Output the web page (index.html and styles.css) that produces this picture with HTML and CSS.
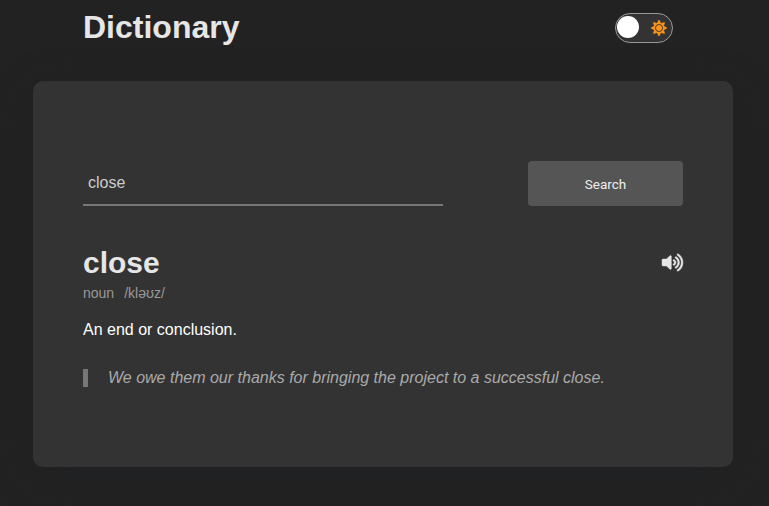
FILE: index.html
```html
<!DOCTYPE html>
<html lang="en">
<head>
<meta charset="utf-8">
<title>Dictionary</title>
<link rel="stylesheet" href="styles.css">
</head>
<body>
<header class="header">
  <h1 class="title">Dictionary</h1>
  <div class="toggle">
    <span class="knob"></span>
    <svg class="sun" viewBox="0 0 512 512"><path fill="#f7931e" stroke="#f7931e" stroke-width="8" d="M256 160c-52.900 0-96 43.100-96 96s43.100 96 96 96 96-43.100 96-96-43.100-96-96-96zm246.400 80.500l-94.700-47.300 33.500-100.400c4.500-13.600-8.400-26.500-21.900-21.900l-100.400 33.500-47.400-94.800c-6.400-12.800-24.600-12.800-31 0l-47.300 94.700L92.700 70.800c-13.600-4.500-26.500 8.400-21.900 21.900l33.500 100.400-94.700 47.400c-12.800 6.400-12.800 24.600 0 31l94.700 47.300-33.500 100.500c-4.500 13.600 8.400 26.500 21.900 21.900l100.400-33.500 47.300 94.700c6.400 12.800 24.600 12.800 31 0l47.300-94.700 100.400 33.500c13.600 4.500 26.500-8.400 21.900-21.900l-33.500-100.400 94.700-47.300c13-6.500 13-24.700.2-31.100zm-155.900 106c-49.900 49.900-131.100 49.900-181 0-49.900-49.900-49.900-131.100 0-181 49.900-49.900 131.100-49.900 181 0 49.900 49.900 49.900 131.100 0 181z"/></svg>
  </div>
</header>
<main class="card">
  <div class="search">
    <input class="field" type="text" value="close">
    <button class="button">Search</button>
  </div>
  <div class="word">
    <h2 class="term">close</h2>
    <svg class="volume" viewBox="0 0 576 512"><path fill="#e6e6e6" stroke="#e6e6e6" stroke-width="12" d="M215.030 71.050L126.060 160H24c-13.260 0-24 10.740-24 24v144c0 13.250 10.740 24 24 24h102.060l88.970 88.950c15.030 15.030 40.970 4.470 40.970-16.970V88.020c0-21.460-25.960-31.980-40.970-16.970zm233.320-51.080c-11.170-7.330-26.180-4.240-33.510 6.950-7.340 11.170-4.220 26.180 6.950 33.510 66.270 43.490 105.820 116.600 105.820 195.580 0 78.980-39.550 152.090-105.820 195.580-11.170 7.320-14.290 22.340-6.950 33.500 7.040 10.710 21.930 14.560 33.510 6.950C528.270 439.580 576 351.330 576 256S528.270 72.430 448.350 19.970zM480 256c0-63.530-32.060-121.940-85.770-156.240-11.190-7.140-26.030-3.820-33.120 7.460s-3.780 26.210 7.410 33.360C408.270 165.970 432 209.110 432 256s-23.730 90.020-63.480 115.420c-11.190 7.140-14.500 22.070-7.410 33.360 6.510 10.360 21.120 15.140 33.120 7.460C447.940 377.940 480 319.540 480 256zm-141.770-76.870c-11.580-6.330-26.190-2.160-32.610 9.450-6.390 11.610-2.160 26.200 9.450 32.610C327.980 228.280 336 241.630 336 256c0 14.380-8.020 27.720-20.920 34.810-11.610 6.410-15.840 21-9.450 32.610 6.430 11.660 21.050 15.800 32.610 9.450 28.230-15.550 45.770-45 45.770-76.880s-17.540-61.320-45.780-76.860z"/></svg>
  </div>
  <div class="details"><span>noun</span><span>/kləʊz/</span></div>
  <p class="meaning">An end or conclusion.</p>
  <p class="example">We owe them our thanks for bringing the project to a successful close.</p>
</main>
</body>
</html>
```
FILE: styles.css
```css
* { box-sizing: border-box; margin: 0; padding: 0; }
body { background: #222; font-family: "Liberation Sans", Arial, sans-serif; height: 506px; overflow: hidden; }
.header { display: flex; justify-content: space-between; height: 81px; padding: 8px 96px 0 83px; }
.title { font-size: 32px; line-height: 38px; color: #e6e6e6; }
.toggle { display: flex; justify-content: space-between; width: 58px; height: 30px; margin-top: 5px; padding: 2px 5px 0 1px; border: 1px solid #999; border-radius: 15px; background: #333; }
.knob { width: 22px; height: 22px; border-radius: 50%; background: #fff; }
.sun { width: 16px; height: 16px; margin-top: 4px; overflow: visible; }
.card { width: 700px; height: 386px; margin-left: 33px; padding: 80px 50px; background: #333; border-radius: 10px; box-shadow: 0 10px 40px rgba(30, 33, 38, .4); }
.search { display: flex; justify-content: space-between; height: 45px; }
.field { width: 360px; padding: 0 5px; border: 0; border-bottom: 2px solid #777; background: transparent; outline: 0; color: #ccc; font: 16px "Liberation Sans", Arial, sans-serif; }
.button { width: 155px; border: 0; border-radius: 4px; background: #555; color: #eee; font: 400 13.5px Roboto, "Liberation Sans", sans-serif; }
.word { display: flex; justify-content: space-between; margin-top: 39px; height: 35px; }
.term { font-size: 30px; line-height: 35px; color: #e6e6e6; }
.volume { width: 21px; height: 19px; margin-top: 8px; overflow: visible; }
.details { display: flex; gap: 10px; margin-top: 5px; font-size: 14px; line-height: 16px; color: #999; }
.meaning { margin-top: 20px; font-size: 16px; line-height: 18px; color: #fff; }
.example { margin-top: 30px; padding-left: 20px; border-left: 5px solid #777; font-size: 16px; line-height: 18px; font-style: italic; color: #aaa; }
```
